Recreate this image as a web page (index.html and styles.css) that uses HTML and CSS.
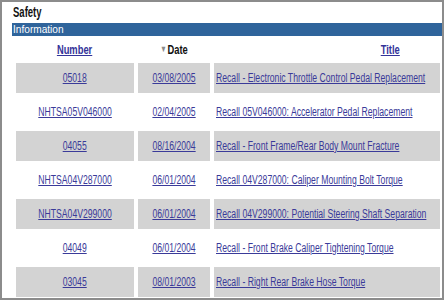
FILE: index.html
```html
<!DOCTYPE html>
<html>
<head>
<meta charset="utf-8">
<link rel="stylesheet" href="styles.css">
</head>
<body>
<div class="frame">
  <h1 class="title"><span class="narrow-left">Safety</span></h1>
  <div class="bar"><span class="narrow-left">Information</span></div>
  <table class="grid">
    <colgroup><col class="c-num"><col class="c-date"><col class="c-title"></colgroup>
    <thead>
      <tr>
        <th><a href="#" class="hlink">Number</a></th>
        <th><span class="hdate"><span class="sort">&#9660;</span>Date</span></th>
        <th class="th-title"><a href="#" class="hlink">Title</a></th>
      </tr>
    </thead>
    <tbody>
      <tr class="odd"><td><a href="#">05018</a></td><td><a href="#">03/08/2005</a></td><td class="t"><a href="#">Recall - Electronic Throttle Control Pedal Replacement</a></td></tr>
      <tr><td><a href="#">NHTSA05V046000</a></td><td><a href="#">02/04/2005</a></td><td class="t"><a href="#">Recall 05V046000: Accelerator Pedal Replacement</a></td></tr>
      <tr class="odd"><td><a href="#">04055</a></td><td><a href="#">08/16/2004</a></td><td class="t"><a href="#">Recall - Front Frame/Rear Body Mount Fracture</a></td></tr>
      <tr><td><a href="#">NHTSA04V287000</a></td><td><a href="#">06/01/2004</a></td><td class="t"><a href="#">Recall 04V287000: Caliper Mounting Bolt Torque</a></td></tr>
      <tr class="odd"><td><a href="#">NHTSA04V299000</a></td><td><a href="#">06/01/2004</a></td><td class="t"><a href="#">Recall 04V299000: Potential Steering Shaft Separation</a></td></tr>
      <tr><td><a href="#">04049</a></td><td><a href="#">06/01/2004</a></td><td class="t"><a href="#">Recall - Front Brake Caliper Tightening Torque</a></td></tr>
      <tr class="odd"><td><a href="#">03045</a></td><td><a href="#">08/01/2003</a></td><td class="t"><a href="#">Recall - Right Rear Brake Hose Torque</a></td></tr>
    </tbody>
  </table>
</div>
</body>
</html>
```
FILE: styles.css
```css
html, body { margin: 0; padding: 0; background: #fff; }
.frame {
  width: 444px; height: 300px; box-sizing: border-box;
  border: 2px solid #8c8c8c;
  padding: 0 0 0 10px;
  overflow: hidden;
  font-family: "Liberation Sans", Arial, sans-serif;
}
.narrow-left { display: inline-block; transform: scaleX(0.68); transform-origin: left center; white-space: nowrap; }
.title {
  margin: 0; padding: 1px 0 0 1px;
  height: 20px; line-height: 18px;
  font-size: 14px; font-weight: bold; color: #111;
}
.bar {
  height: 13px; line-height: 13px;
  background: #2f649b; color: #fff;
  font-size: 11px; padding-left: 1px;
}
.bar .narrow-left { transform: scaleX(0.92); }
.grid {
  border-collapse: separate; border-spacing: 4px;
  table-layout: fixed; width: 432px; margin: 0;
  font-size: 12px;
}
.c-num { width: 118px; }
.c-date { width: 72px; }
.grid th { height: 19px; padding: 0; font-size: 13px; font-weight: bold; color: #111; text-align: center; white-space: nowrap; }
.grid th.th-title { text-align: right; padding-right: 37px; }
.grid td { height: 30px; padding: 0; text-align: center; white-space: nowrap; }
.grid td.t { text-align: left; padding-left: 2px; }
.grid tr.odd td { background: #d3d3d3; }
.grid a, .hdate {
  display: inline-block; transform: scaleX(0.72); transform-origin: center center;
  color: #3a3a99; text-decoration: underline;
}
.hdate { color: #111; text-decoration: none; }
.grid td.t a { transform-origin: left center; }
.grid a.hlink { color: #333399; }
.sort { color: #8a8a8a; font-size: 9px; vertical-align: 2px; margin-right: 1px; }
```
